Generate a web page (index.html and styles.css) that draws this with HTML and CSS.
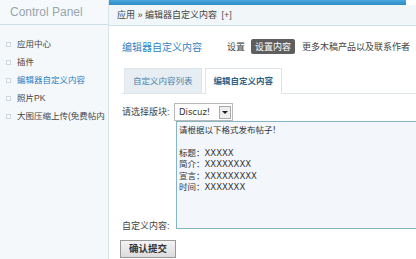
FILE: index.html
```html
<!DOCTYPE html>
<html>
<head>
<meta charset="utf-8">
<link rel="stylesheet" href="styles.css">
</head>
<body>
<div class="page">
  <aside class="side">
    <div class="side-head">Control Panel</div>
    <ul class="menu">
      <li class="item"><span class="dot"></span>应用中心</li>
      <li class="item"><span class="dot"></span>插件</li>
      <li class="item active"><span class="dot"></span>编辑器自定义内容</li>
      <li class="item"><span class="dot"></span>照片PK</li>
      <li class="item"><span class="dot"></span>大图压缩上传(免费帖内</li>
    </ul>
  </aside>
  <main class="main">
    <div class="topbar"></div>
    <div class="crumb">应用 » 编辑器自定义内容 <span class="plus">[+]</span></div>
    <div class="content">
      <div class="title-row">
        <span class="title">编辑器自定义内容</span>
        <span class="link">设置</span>
        <span class="link on">设置内容</span>
        <span class="link">更多木稿产品以及联系作者</span>
      </div>
      <div class="tabs">
        <span class="tab">自定义内容列表</span>
        <span class="tab cur">编辑自定义内容</span>
      </div>
      <div class="form">
        <div class="labels">
          <span class="lab">请选择版块:</span>
          <span class="lab lab2">自定义内容:</span>
        </div>
        <div class="fields">
          <div class="select"><span class="sel-text">Discuz!</span><span class="arrow"></span></div>
          <div class="area">请根据以下格式发布帖子!<br><br>标题：XXXXX<br>简介：XXXXXXXX<br>宣言：XXXXXXXXX<br>时间：XXXXXXX</div>
        </div>
      </div>
      <div class="btn-row"><span class="btn">确认提交</span></div>
    </div>
  </main>
</div>
</body>
</html>
```

FILE: styles.css
```css
* { box-sizing: border-box; }
html, body { margin: 0; padding: 0; }
body {
  width: 416px; height: 259px; overflow: hidden;
  font-family: "Liberation Sans", "Noto Sans CJK SC", sans-serif;
  font-size: 9px; color: #333; background: #fff;
}
.page { display: flex; height: 259px; }
.side {
  width: 109px; flex: none;
  background: #f4f8fb; border-right: 1px solid #d8e3ea;
}
.side-head {
  height: 25px; line-height: 24px; padding-left: 10px;
  font-size: 12px; color: #97a5b0;
  border-bottom: 1px solid #cfdde6;
  background: #f6f9fb;
}
.menu { list-style: none; margin: 0; padding: 10px 0 0 0; }
.item {
  height: 18px; line-height: 18px; padding-left: 6px;
  display: flex; align-items: center; gap: 6px;
  font-size: 8.5px; color: #444; white-space: nowrap; overflow: hidden;
}
.item.active { color: #2d7fbd; }
.dot {
  width: 5px; height: 5px; border: 1px solid #cdd7de; background: #f8fafc; flex: none;
}
.main { flex: 1; min-width: 0; display: flex; flex-direction: column; }
.topbar {
  height: 5px; margin-right: 10px;
  background: linear-gradient(#4aa8dc, #2d8bc6);
}
.crumb {
  height: 21px; line-height: 20px; padding-left: 8px;
  background: #f1f6f9; border-bottom: 1px solid #cfe1ea;
  font-size: 9px; color: #444;
}
.plus { color: #555; margin-left: 2px; }
.content { padding: 0 0 0 13px; }
.title-row {
  display: flex; align-items: center; height: 20px; margin-top: 10px;
  white-space: nowrap;
}
.title { font-size: 10px; color: #2f86c2; margin-right: 25px; }
.link { font-size: 9px; color: #444; margin-right: 6px; }
.link.on {
  background: #5e5e5e; color: #fff; padding: 1px 4px; border-radius: 2px;
  margin-left: 0; margin-right: 7px;
}
.tabs {
  display: flex; gap: 3px; margin-top: 12px; padding-left: 2px;
  border-bottom: 1px solid #dde4ea; height: 26px; align-items: flex-end;
}
.tab {
  height: 25px; line-height: 24px; padding: 0 8px;
  background: #e7eef3; color: #4a7fa6; font-size: 8.5px;
  border: 1px solid #dde4ea; border-bottom: none;
}
.tab.cur {
  background: #fff; color: #2f5f86; font-weight: bold; height: 26px; margin-bottom: -1px;
}
.form { display: flex; margin-top: 9px; }
.labels {
  width: 52px; flex: none; display: flex; flex-direction: column;
  justify-content: space-between; font-size: 9px; color: #444; white-space: nowrap;
}
.lab { line-height: 18px; }
.lab2 { line-height: 10px; margin-bottom: -2px; }
.fields { flex: 1; display: flex; flex-direction: column; }
.select {
  width: 59px; height: 18px; display: flex; align-items: center; justify-content: space-between;
  border: 1px solid #b9b9b9; background: #fff; padding: 0 1px 0 4px;
  font-family: "DejaVu Sans", sans-serif; font-size: 8.5px; color: #333;
}
.arrow {
  width: 12px; height: 13px; background: #eee; border: 1px solid #aaa; position: relative;
}
.arrow::after {
  content: ""; position: absolute; left: 2px; top: 4px;
  border-left: 3px solid transparent; border-right: 3px solid transparent; border-top: 3px solid #222;
}
.area {
  margin-left: 2px; height: 108px;
  border: 1px solid #86b5c8; border-right: none; background: #f3f7fb;
  padding: 3px 2px;
  font-family: "DejaVu Sans", "Noto Sans CJK SC", sans-serif;
  font-size: 8.5px; line-height: 11.4px; color: #333;
}
.btn-row { margin-top: 11px; }
.btn {
  display: inline-block; height: 18px; line-height: 16px; padding: 0 8px;
  margin-left: -2px;
  border: 1px solid #999; background: linear-gradient(#f4f4f4, #dcdcdc);
  font-size: 9.5px; font-weight: bold; color: #333;
}
```
